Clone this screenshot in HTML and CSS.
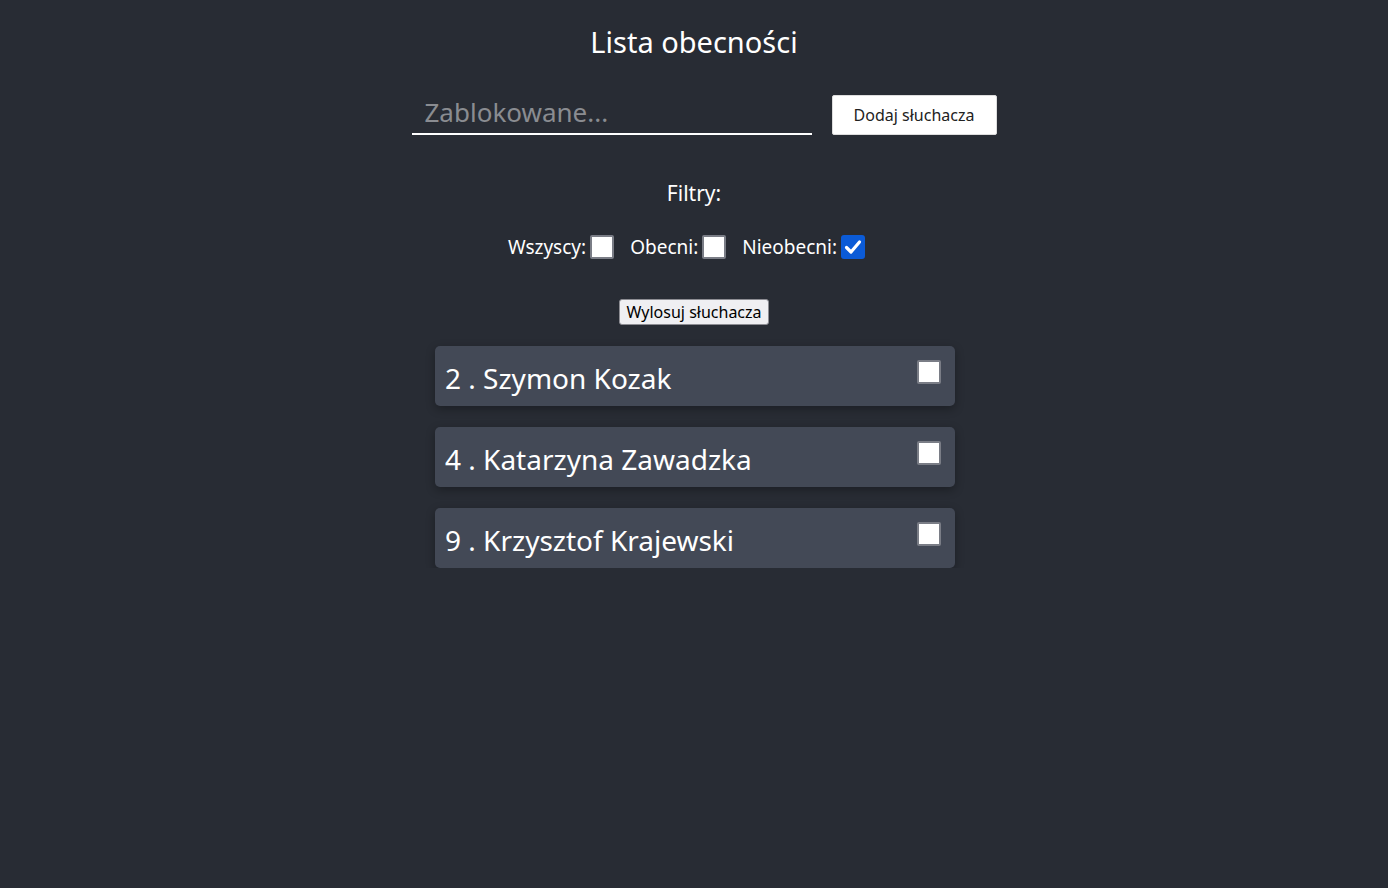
FILE: index.html
```html
<!DOCTYPE html>
<html lang="pl">
<head>
<meta charset="utf-8">
<title>Lista obecności</title>
<link rel="stylesheet" href="styles.css">
</head>
<body>
<div class="app">
  <h1 class="title">Lista obecności</h1>
  <div class="add-row">
    <input class="name-input" type="text" placeholder="Zablokowane..." disabled>
    <button class="add-btn">Dodaj słuchacza</button>
  </div>
  <div class="filters-title">Filtry:</div>
  <div class="filters">
    <label class="filter">Wszyscy:<span class="cb"></span></label>
    <label class="filter">Obecni:<span class="cb"></span></label>
    <label class="filter">Nieobecni:<span class="cb checked"><svg viewBox="0 0 24 24" width="24" height="24"><path d="M5.5 12.5l4.5 4.5 8.5-10" fill="none" stroke="#fff" stroke-width="3.2" stroke-linecap="round" stroke-linejoin="round"/></svg></span></label>
  </div>
  <button class="draw-btn">Wylosuj słuchacza</button>
  <div class="list">
    <div class="card"><span class="card-name">2 . Szymon Kozak</span><span class="cb card-cb"></span></div>
    <div class="card"><span class="card-name">4 . Katarzyna Zawadzka</span><span class="cb card-cb"></span></div>
    <div class="card"><span class="card-name">9 . Krzysztof Krajewski</span><span class="cb card-cb"></span></div>
  </div>
</div>
</body>
</html>
```
FILE: styles.css
```css
html, body {
  margin: 0;
  padding: 0;
  background: #282c34;
  min-height: 100%;
}
body {
  font-family: "Noto Sans", "Open Sans", sans-serif;
  color: #fff;
}
.app {
  display: flex;
  flex-direction: column;
  align-items: center;
}
.title {
  margin: 22px 0 0;
  font-size: 29px;
  font-weight: 400;
  line-height: 40px;
}
.add-row {
  display: flex;
  align-items: flex-end;
  gap: 20px;
  margin-top: 33px;
  padding-left: 20px;
}
.name-input {
  width: 400px;
  box-sizing: border-box;
  height: 40px;
  background: transparent;
  border: none;
  border-bottom: 2px solid #fff;
  font-family: inherit;
  font-size: 26px;
  padding: 0 13px 5px;
  color: #fff;
  outline: none;
}
.name-input::placeholder {
  color: #8a8c91;
}
.add-btn {
  width: 165px;
  height: 40px;
  background: #fff;
  border: 1px solid #ddd;
  border-radius: 2px;
  font-family: inherit;
  font-size: 16px;
  color: #222;
  padding: 0;
}
.filters-title {
  margin-top: 44px;
  font-size: 21px;
  line-height: 28px;
}
.filters {
  display: flex;
  gap: 16px;
  margin-top: 26px;
  margin-right: 15px;
  font-size: 19px;
  line-height: 28px;
}
.filter {
  display: flex;
  align-items: center;
  gap: 4px;
}
.cb {
  display: inline-block;
  width: 24px;
  height: 24px;
  box-sizing: border-box;
  background: #fff;
  border: 2px solid #7a7d86;
  border-radius: 2px;
}
.cb.checked {
  background: #0b5bd7;
  border-color: #0b5bd7;
  border-width: 0;
  border-radius: 3px;
}
.cb.checked svg {
  display: block;
}
.draw-btn {
  margin-top: 38px;
  height: 26px;
  padding: 0 6px;
  font-family: inherit;
  font-size: 16px;
  color: #000;
  background: #efeff2;
  border: 1px solid #8d8d93;
  border-radius: 3px;
}
.list {
  margin-top: 21px;
  margin-left: 2px;
  display: flex;
  flex-direction: column;
  gap: 21px;
  width: 520px;
}
.card {
  height: 60px;
  background: #434956;
  border-radius: 5px;
  box-shadow: 0 3px 10px rgba(0, 0, 0, 0.3);
  display: flex;
  justify-content: space-between;
  align-items: flex-start;
  padding: 0 14px 0 10px;
}
.card-name {
  font-size: 28px;
  line-height: 64px;
}
.card-cb {
  margin-top: 14px;
}
```
